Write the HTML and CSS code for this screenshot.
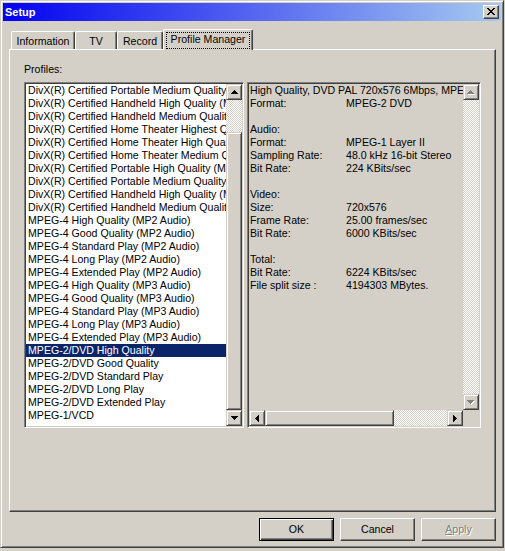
FILE: index.html
```html
<!DOCTYPE html>
<html>
<head>
<meta charset="utf-8">
<title>Setup</title>
<link rel="stylesheet" href="styles.css">
</head>
<body>
<div class="window">
  <div class="titlebar">
    <span class="title">Setup</span>
    <span class="close"><svg width="8" height="7" viewBox="0 0 8 7" shape-rendering="crispEdges"><path d="M0 0h2v1h-2zM6 0h2v1h-2zM1 1h2v1h-2zM5 1h2v1h-2zM2 2h4v1h-4zM3 3h2v1h-2zM2 4h4v1h-4zM1 5h2v1h-2zM5 5h2v1h-2zM0 6h2v1h-2zM6 6h2v1h-2z" fill="#000"/></svg></span>
  </div>
  <div class="client">
    <div class="tabs">
      <div class="tab tab-info">Information</div>
      <div class="tab tab-tv">TV</div>
      <div class="tab tab-rec">Record</div>
      <div class="tab tab-pm selected"><span class="focus">Profile Manager</span></div>
    </div>
    <div class="panel">
      <div class="label">Profiles:</div>
      <div class="row">
        <div class="listbox sunken">
          <div class="items">
            <div class="item">DivX(R) Certified Portable Medium Quality</div>
            <div class="item">DivX(R) Certified Handheld High Quality (MP2 Audio)</div>
            <div class="item">DivX(R) Certified Handheld Medium Quality</div>
            <div class="item">DivX(R) Certified Home Theater Highest Quality</div>
            <div class="item">DivX(R) Certified Home Theater High Quality</div>
            <div class="item">DivX(R) Certified Home Theater Medium Quality</div>
            <div class="item">DivX(R) Certified Portable High Quality (MP3 Audio)</div>
            <div class="item">DivX(R) Certified Portable Medium Quality</div>
            <div class="item">DivX(R) Certified Handheld High Quality (MP3 Audio)</div>
            <div class="item">DivX(R) Certified Handheld Medium Quality</div>
            <div class="item">MPEG-4 High Quality (MP2 Audio)</div>
            <div class="item">MPEG-4 Good Quality (MP2 Audio)</div>
            <div class="item">MPEG-4 Standard Play (MP2 Audio)</div>
            <div class="item">MPEG-4 Long Play (MP2 Audio)</div>
            <div class="item">MPEG-4 Extended Play (MP2 Audio)</div>
            <div class="item">MPEG-4 High Quality (MP3 Audio)</div>
            <div class="item">MPEG-4 Good Quality (MP3 Audio)</div>
            <div class="item">MPEG-4 Standard Play (MP3 Audio)</div>
            <div class="item">MPEG-4 Long Play (MP3 Audio)</div>
            <div class="item">MPEG-4 Extended Play (MP3 Audio)</div>
            <div class="item active">MPEG-2/DVD High Quality</div>
            <div class="item">MPEG-2/DVD Good Quality</div>
            <div class="item">MPEG-2/DVD Standard Play</div>
            <div class="item">MPEG-2/DVD Long Play</div>
            <div class="item">MPEG-2/DVD Extended Play</div>
            <div class="item">MPEG-1/VCD</div>
          </div>
          <div class="vscroll">
            <div class="sbtn"><svg width="7" height="4" viewBox="0 0 7 4" shape-rendering="crispEdges"><path d="M3 0h1v1h-1zM2 1h3v1h-3zM1 2h5v1h-5zM0 3h7v1h-7z" fill="#000"/></svg></div>
            <div class="track track-top"></div>
            <div class="thumb thumb-v"></div>
            <div class="sbtn"><svg width="7" height="4" viewBox="0 0 7 4" shape-rendering="crispEdges"><path d="M0 0h7v1h-7zM1 1h5v1h-5zM2 2h3v1h-3zM3 3h1v1h-1z" fill="#000"/></svg></div>
          </div>
        </div>
        <div class="infobox sunken">
          <div class="info">
            <div class="line">High Quality, DVD PAL 720x576 6Mbps, MPEG-2 Video, MPEG-1 Layer II Audio</div>
            <div class="line"><span class="key">Format:</span><span>MPEG-2 DVD</span></div>
            <div class="line"></div>
            <div class="line">Audio:</div>
            <div class="line"><span class="key">Format:</span><span>MPEG-1 Layer II</span></div>
            <div class="line"><span class="key">Sampling Rate:</span><span>48.0 kHz 16-bit Stereo</span></div>
            <div class="line"><span class="key">Bit Rate:</span><span>224 KBits/sec</span></div>
            <div class="line"></div>
            <div class="line">Video:</div>
            <div class="line"><span class="key">Size:</span><span>720x576</span></div>
            <div class="line"><span class="key">Frame Rate:</span><span>25.00 frames/sec</span></div>
            <div class="line"><span class="key">Bit Rate:</span><span>6000 KBits/sec</span></div>
            <div class="line"></div>
            <div class="line">Total:</div>
            <div class="line"><span class="key">Bit Rate:</span><span>6224 KBits/sec</span></div>
            <div class="line"><span class="key">File split size :</span><span>4194303 MBytes.</span></div>
          </div>
          <div class="vscroll">
            <div class="sbtn"><svg width="8" height="5" viewBox="0 0 8 5" shape-rendering="crispEdges"><path d="M4 1h1v1h-1zM3 2h3v1h-3zM2 3h5v1h-5zM1 4h7v1h-7z" fill="#fff"/><path d="M3 0h1v1h-1zM2 1h3v1h-3zM1 2h5v1h-5zM0 3h7v1h-7z" fill="#808080"/></svg></div>
            <div class="track track-fill"></div>
            <div class="sbtn"><svg width="8" height="5" viewBox="0 0 8 5" shape-rendering="crispEdges"><path d="M1 1h7v1h-7zM2 2h5v1h-5zM3 3h3v1h-3zM4 4h1v1h-1z" fill="#fff"/><path d="M0 0h7v1h-7zM1 1h5v1h-5zM2 2h3v1h-3zM3 3h1v1h-1z" fill="#808080"/></svg></div>
          </div>
          <div class="hscroll">
            <div class="sbtn"><svg width="4" height="7" viewBox="0 0 4 7" shape-rendering="crispEdges"><path d="M0 3h1v1h-1zM1 2h1v3h-1zM2 1h1v5h-1zM3 0h1v7h-1z" fill="#000"/></svg></div>
            <div class="thumb thumb-h"></div>
            <div class="track track-fill"></div>
            <div class="sbtn"><svg width="4" height="7" viewBox="0 0 4 7" shape-rendering="crispEdges"><path d="M0 0h1v7h-1zM1 1h1v5h-1zM2 2h1v3h-1zM3 3h1v1h-1z" fill="#000"/></svg></div>
          </div>
          <div class="corner"></div>
        </div>
      </div>
    </div>
    <div class="buttons">
      <div class="btn default">OK</div>
      <div class="btn">Cancel</div>
      <div class="btn disabled"><u>A</u>pply</div>
    </div>
  </div>
</div>
</body>
</html>
```

FILE: styles.css
```css
* { box-sizing: border-box; }

html, body {
  margin: 0;
  padding: 0;
  background: #d4d0c8;
}

body {
  font-family: "Liberation Sans", Arial, sans-serif;
  font-size: 10.6px;
  line-height: 13px;
  color: #000;
}

.window {
  width: 504px;
  height: 548px;
  border: 1px solid;
  border-color: #d4d0c8 #404040 #404040 #d4d0c8;
  box-shadow: inset 1px 1px #fff, inset -1px -1px #808080;
  padding: 2px;
  background: #d4d0c8;
}

.titlebar {
  height: 18px;
  background: linear-gradient(to right, #0202f0, #a6caf0);
  display: flex;
  align-items: flex-start;
  justify-content: space-between;
}

.title {
  color: #fff;
  font-weight: bold;
  font-size: 11px;
  line-height: 18px;
  padding-left: 2px;
}

.close {
  width: 16px;
  height: 14px;
  margin: 2px 2px 0 0;
  background: #d4d0c8;
  border: 1px solid;
  border-color: #fff #404040 #404040 #fff;
  box-shadow: inset -1px -1px #808080;
  display: flex;
  align-items: center;
  justify-content: center;
  padding: 0 1px 1px 0;
}

.close svg { display: block; }

.client {
  padding: 8px 0 0 6px;
}

.tabs {
  display: flex;
  align-items: flex-end;
  padding-left: 2px;
  height: 20px;
}

.tab {
  height: 18px;
  border-top: 1px solid #fff;
  border-left: 1px solid #fff;
  border-right: 1px solid #404040;
  box-shadow: inset -1px 0 #808080;
  border-radius: 2px 2px 0 0;
  padding-top: 3px;
  text-align: center;
  white-space: nowrap;
  background: #d4d0c8;
}

.tab-info { width: 64px; }
.tab-tv { width: 42px; }
.tab-rec { width: 46px; }
.tab-pm { width: 90px; }

.tab.selected {
  height: 21px;
  padding-top: 2px;
  margin-bottom: -1px;
  position: relative;
  z-index: 1;
}

.focus {
  display: block;
  margin: 0 2px;
  height: 17px;
  border: 1px dotted #000;
  line-height: 13px;
  padding-top: 0;
}

.panel {
  width: 487px;
  height: 463px;
  border: 1px solid;
  border-color: #fff #404040 #404040 #fff;
  box-shadow: inset -1px -1px #808080;
  padding: 13px 0 0 14px;
}

.label {
  height: 13px;
  margin-bottom: 6px;
}

.row {
  display: flex;
  gap: 3px;
}

.sunken {
  border: 1px solid;
  border-color: #808080 #fff #fff #808080;
  padding: 1px;
  box-shadow: inset 1px 1px #404040, inset -1px -1px #d4d0c8;
}

.listbox {
  width: 220px;
  height: 346px;
  display: flex;
  background: #fff;
}

.items {
  flex: 1;
  min-width: 0;
  overflow: hidden;
  background: #fff;
}

.item {
  height: 13px;
  padding-left: 2px;
  white-space: nowrap;
  overflow: hidden;
}

.item.active {
  background: #0a246a;
  color: #fff;
}

.vscroll {
  width: 16px;
  display: flex;
  flex-direction: column;
}

.hscroll {
  height: 16px;
  display: flex;
}

.sbtn {
  width: 16px;
  height: 16px;
  flex: none;
  background: #d4d0c8;
  border: 1px solid;
  border-color: #d4d0c8 #404040 #404040 #d4d0c8;
  box-shadow: inset 1px 1px #fff, inset -1px -1px #808080;
  display: flex;
  align-items: center;
  justify-content: center;
}

.sbtn svg { display: block; }

.track {
  background: repeating-conic-gradient(#fff 0% 25%, #d4d0c8 0% 50%) 0 0 / 2px 2px;
}

.track-top { height: 32px; flex: none; }
.track-fill { flex: 1; }

.thumb {
  background: #d4d0c8;
  border: 1px solid;
  border-color: #d4d0c8 #404040 #404040 #d4d0c8;
  box-shadow: inset 1px 1px #fff, inset -1px -1px #808080;
}

.thumb-v { flex: 1; }
.thumb-h { width: 129px; flex: none; }

.infobox {
  width: 234px;
  height: 346px;
  background: #d4d0c8;
  display: grid;
  grid-template-columns: 1fr 16px;
  grid-template-rows: 1fr 16px;
}

.info {
  overflow: hidden;
  padding-left: 1px;
  min-width: 0;
}

.line {
  height: 13px;
  display: flex;
  white-space: nowrap;
}

.key {
  width: 96px;
  flex: none;
}

.corner { background: #d4d0c8; }

.buttons {
  width: 487px;
  display: flex;
  justify-content: flex-end;
  gap: 6px;
  margin-top: 6px;
}

.btn {
  width: 75px;
  height: 23px;
  border: 1px solid;
  border-color: #fff #404040 #404040 #fff;
  box-shadow: inset -1px -1px #808080;
  display: flex;
  align-items: center;
  justify-content: center;
  padding-bottom: 1px;
}

.btn.default {
  border-color: #000;
  box-shadow: inset 1px 1px #fff, inset -1px -1px #404040, inset -2px -2px #808080;
}

.btn.disabled {
  color: #808080;
  text-shadow: 1px 1px #fff;
}
```
